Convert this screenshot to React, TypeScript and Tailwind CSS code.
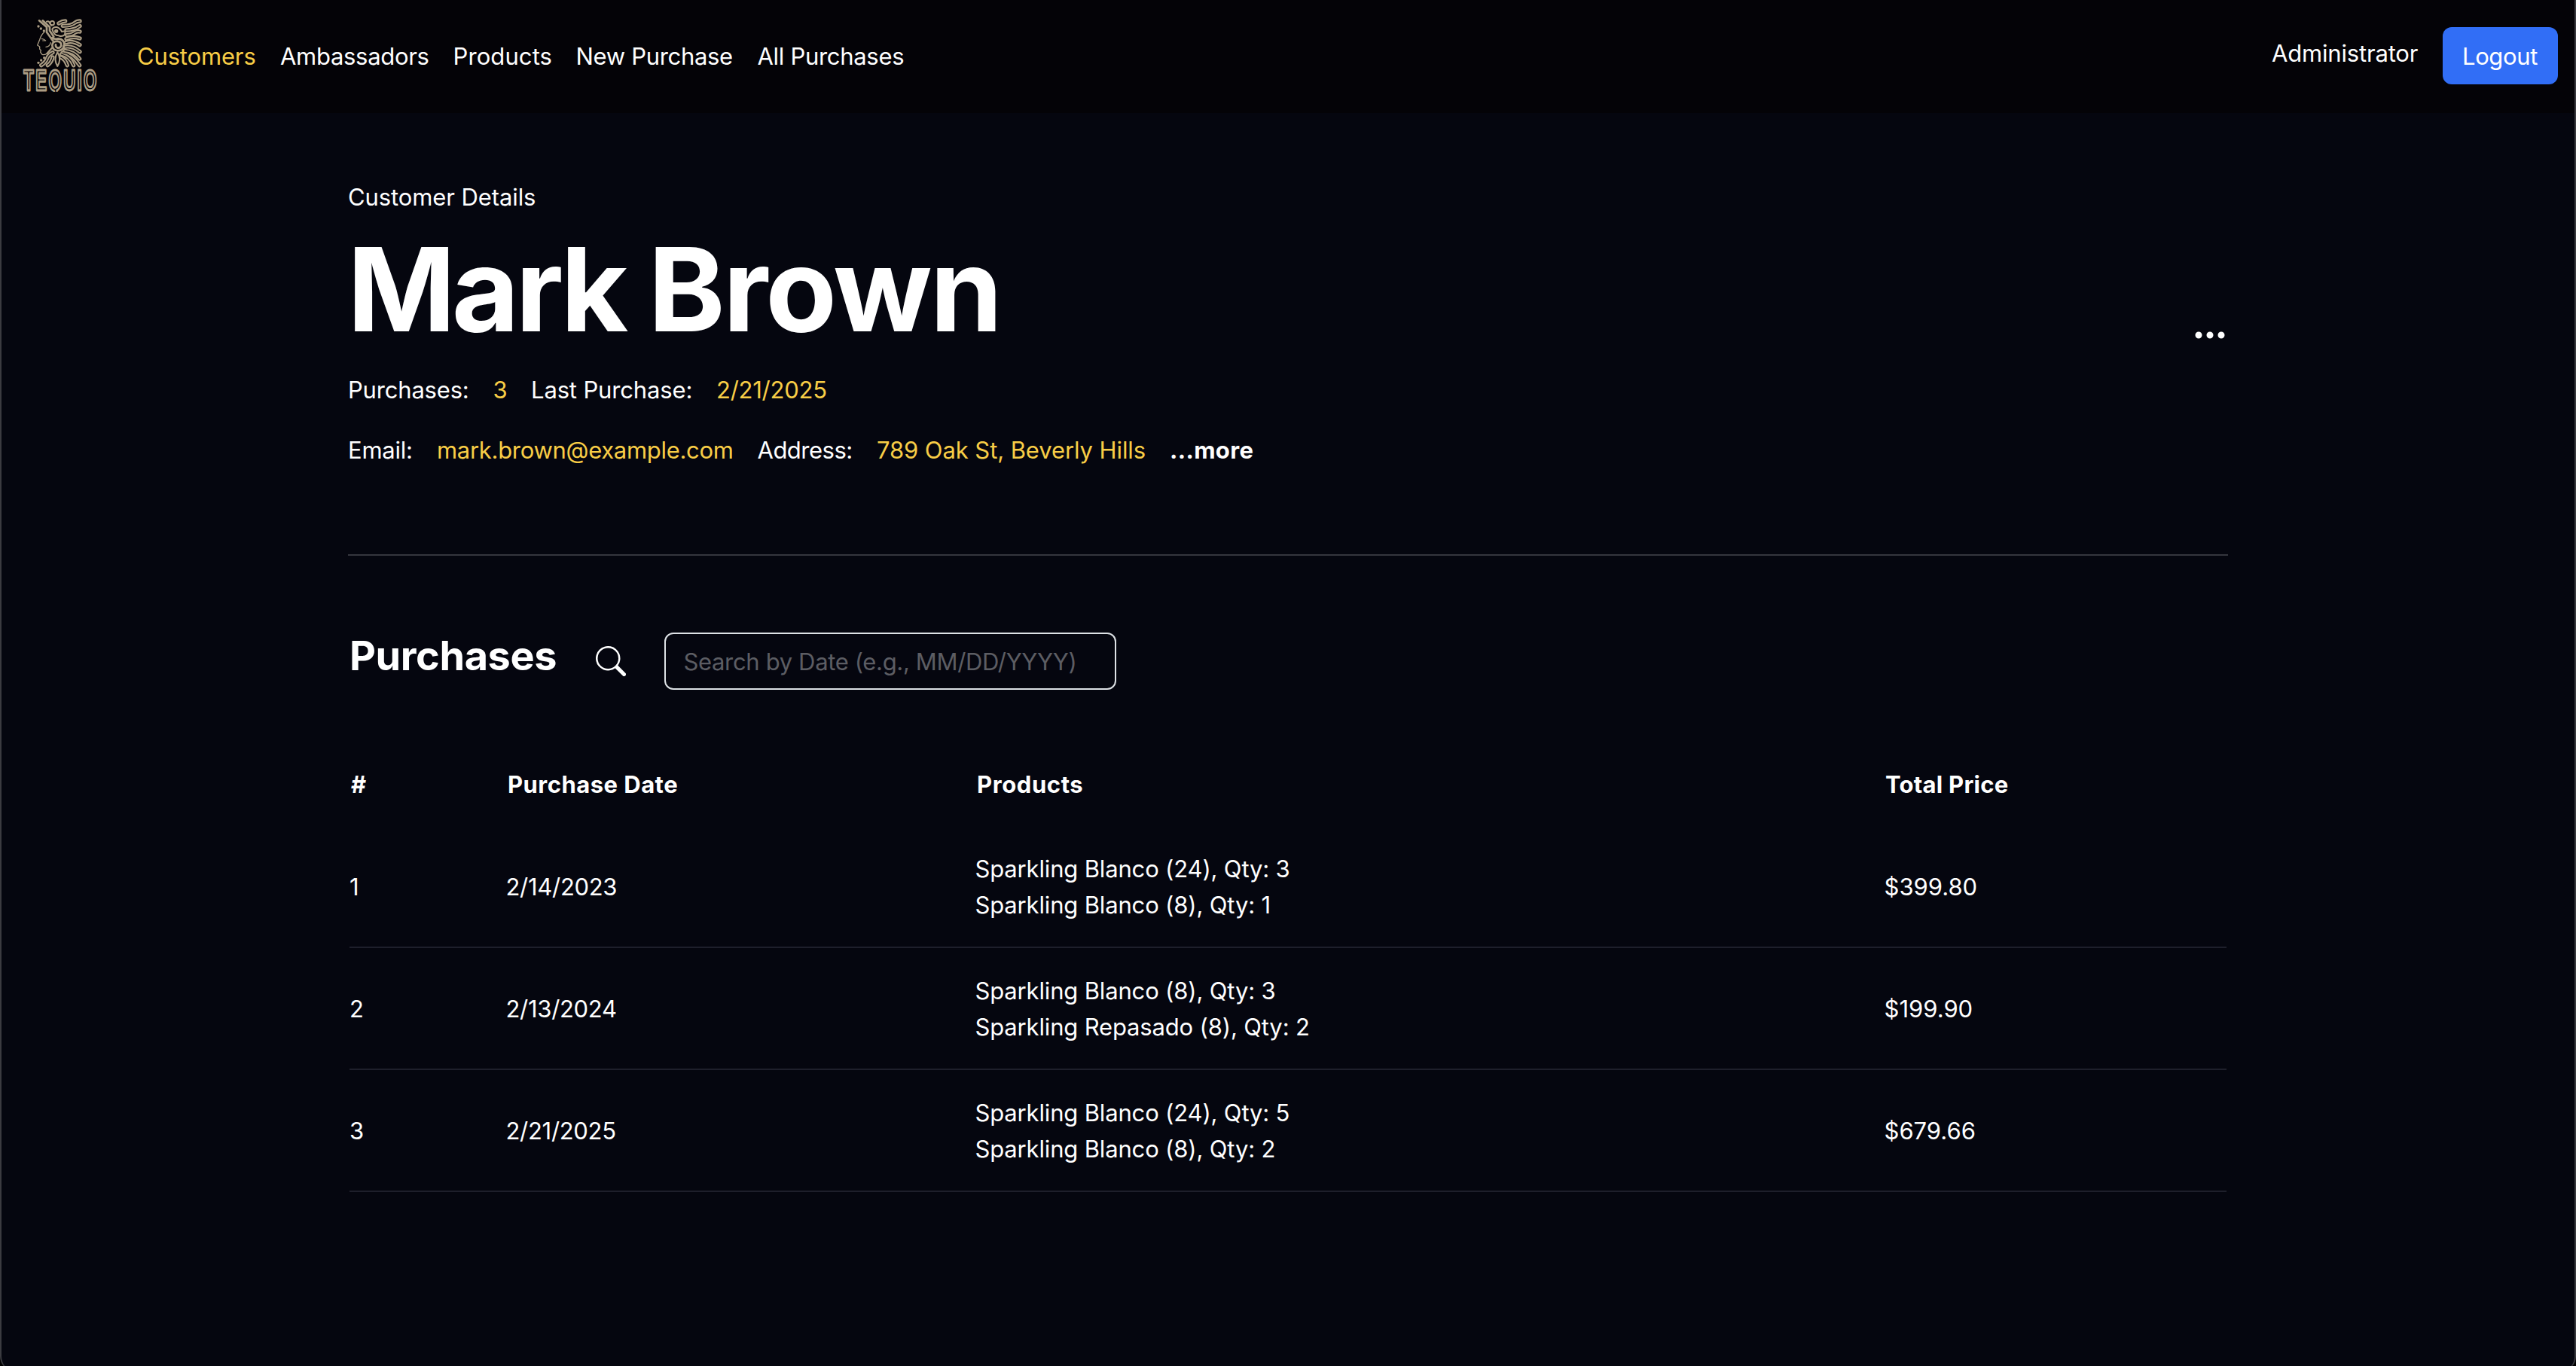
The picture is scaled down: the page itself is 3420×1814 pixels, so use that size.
import React from "react";
import { BsSearch, BsThreeDots } from "react-icons/bs";

const feathers = [
  "M234 93 Q248 84 260 84",
  "M250 103 Q284 103 298 91 Q306 84 318 84",
  "M264 120 Q296 120 318 104",
  "M266 140 Q286 139 298 130 Q308 123 318 126",
  "M264 155 Q292 143 318 153",
  "M262 170 Q288 160 318 179",
  "M257 187 Q288 180 318 206",
  "M258 202 Q294 204 317 234",
  "M250 210 Q288 216 317 260",
  "M244 216 Q278 224 293 260",
  "M242 228 Q260 236 268 260",
  "M210 209 Q192 218 186 236 Q180 250 164 260",
  "M210 228 Q206 248 190 260",
];

function Logo() {
  return (
    <svg className="h-[150px] w-[150px] shrink-0 overflow-visible" viewBox="6 0 450 450" fill="none" strokeLinecap="round" strokeLinejoin="round">
      <clipPath id="wordmark">
        <rect x="80" y="268" width="320" height="98" />
      </clipPath>
      <g stroke="#ab9d84" strokeWidth="16">
        {feathers.map((d) => (
          <path key={d} d={d} />
        ))}
      </g>
      <g stroke="#040307" strokeWidth="3.5">
        {feathers.map((d) => (
          <path key={d} d={d} />
        ))}
      </g>
      <g stroke="#ab9d84" strokeWidth="6">
        <path d="M156 82 L186 108 L186 128 L212 164" strokeWidth="8" />
        <path d="M170 82 L198 108 L198 122 L214 146" strokeWidth="8" />
        <circle cx="208" cy="92" r="8" />
        <path d="M186 86 Q192 82 196 88 Q198 96 206 102" />
        <path d="M208 116 Q214 106 226 108 Q240 112 246 126 L260 124 L258 138 Q248 148 234 142 Q214 142 208 116 Z" fill="#040307" />
        <circle cx="224" cy="124" r="5" fill="#ab9d84" />
        <path d="M208 150 Q216 158 232 154 Q256 156 256 178 Q254 202 230 202 Q208 200 208 180 Q210 164 228 164 Q244 166 244 180 Q242 192 230 191 Q220 188 222 178" strokeWidth="8" />
        <path d="M229 208 Q212 236 229 264 Q246 236 229 208 Z" />
        <path d="M176 128 Q164 138 158 158 L149 180 L158 186 L158 196 L163 200 L161 208 L168 217 Q180 220 188 212" strokeWidth="4" />
        <path d="M188 212 L206 192" strokeWidth="7" />
        <path d="M166 155 Q174 154 182 162 L170 162" strokeWidth="3.5" />
        <path d="M183 187 Q198 186 202 170" strokeWidth="4" />
      </g>
      <g fill="#ab9d84">
        <circle cx="153" cy="105" r="5" />
        <circle cx="163" cy="114" r="5" />
        <circle cx="175" cy="123" r="5" />
        <circle cx="153" cy="250" r="5" />
        <circle cx="164" cy="240" r="5" />
        <circle cx="176" cy="230" r="5" />
      </g>
      <g clipPath="url(#wordmark)">
        <text
          transform="translate(94 361) scale(0.57 1)"
          className="font-['Liberation_Sans'] font-bold tracking-[12.5px]"
          fontSize="117"
          fill="#040307"
          stroke="#ab9d84"
          strokeWidth="9"
        >
          TEQUIO
        </text>
      </g>
    </svg>
  );
}

const navLinks = [
  { label: "Customers", cls: "w-[190px] tracking-[-0.16px] text-[#f8cd46]" },
  { label: "Ambassadors", cls: "w-[229.5px] tracking-[-0.3px]" },
  { label: "Products", cls: "w-[163px] tracking-[0.1px]" },
  { label: "New Purchase", cls: "w-[241px] tracking-[-0.32px]" },
  { label: "All Purchases", cls: "tracking-[-0.3px]" },
];

const purchases = [
  { id: "1", date: "2/14/2023", items: ["Sparkling Blanco (24), Qty: 3", "Sparkling Blanco (8), Qty: 1"], total: "$399.80" },
  { id: "2", date: "2/13/2024", items: ["Sparkling Blanco (8), Qty: 3", "Sparkling Repasado (8), Qty: 2"], total: "$199.90" },
  { id: "3", date: "2/21/2025", items: ["Sparkling Blanco (24), Qty: 5", "Sparkling Blanco (8), Qty: 2"], total: "$679.66" },
];

export default function App() {
  return (
    <div className="h-[1814px] w-[3420px] overflow-hidden bg-black">
      <div className="h-[1821px] overflow-hidden whitespace-nowrap rounded-b-[20px] border-x-2 border-[#3b3b40] bg-[#05060f] font-['Inter',sans-serif] text-[31px] leading-[48px] text-white">
        <header className="flex h-[150px] items-center bg-[#040307] pr-[22px]">
          <Logo />
          <nav className="ml-[30px] flex">
            {navLinks.map((l) => (
              <a key={l.label} className={l.cls}>
                {l.label}
              </a>
            ))}
          </nav>
          <div className="ml-auto flex items-center">
            <span className="w-[227px] pb-2 tracking-[-0.18px]">Administrator</span>
            <button className="mb-[2px] flex h-[76px] w-[153px] items-center justify-center rounded-[12px] bg-[#316ef6] pr-px pt-[2px] tracking-[-0.35px]">
              Logout
            </button>
          </div>
        </header>

        <main className="ml-[460px] w-[2496px] pt-[88px]">
          <section className="flex justify-between">
            <div>
              <p className="tracking-[-0.1px]">Customer Details</p>
              <h1 className="-ml-px mt-[2px] text-[154.6px] font-bold leading-[192px]">
                <span className="tracking-[-5.2px]">Mark </span>
                <span className="tracking-[-2.8px]">Brown</span>
              </h1>
              <div className="mt-[14px] flex">
                <span className="w-[192.5px] tracking-[-0.19px]">Purchases:</span>
                <span className="w-[50.5px] text-[#f8cd46]">3</span>
                <span className="w-[246px] tracking-[-0.15px]">Last Purchase:</span>
                <span className="tracking-[-0.25px] text-[#f8cd46]">2/21/2025</span>
              </div>
              <div className="mt-8 flex">
                <span className="w-[118px] tracking-[-0.24px]">Email:</span>
                <span className="w-[425.5px] tracking-[-0.3px] text-[#f8cd46]">mark.brown@example.com</span>
                <span className="w-[158.5px] tracking-[-0.5px]">Address:</span>
                <span className="w-[389px] tracking-[-0.09px] text-[#f8cd46]">789 Oak St, Beverly Hills</span>
                <span className="font-bold tracking-[0.38px]">...more</span>
              </div>
            </div>
            <BsThreeDots className="mt-[183px] size-12" />
          </section>

          <hr className="mt-[114px] border-t-2 border-[#35363e]" />

          <section className="mt-[102px] flex h-[76px] items-start pl-[2px]">
            <h2 className="-mt-[3px] w-[326.5px] text-[54px] font-bold leading-[67px] tracking-[-0.4px]">Purchases</h2>
            <BsSearch className="mt-[18px] size-10" />
            <input
              className="ml-[51px] h-[76px] w-[600px] rounded-[12px] border-2 border-[#dee2e6] bg-transparent px-6 pt-px tracking-[-0.35px] placeholder:text-[#5c5d63]"
              placeholder="Search by Date (e.g., MM/DD/YYYY)"
            />
          </section>

          <section className="ml-[2px] mt-[102px] w-[2492px]">
            <div className="grid h-[79px] grid-cols-[208px_623px_1207px_452px] pl-[2px] font-bold">
              <span>#</span>
              <span className="tracking-[0.48px]">Purchase Date</span>
              <span className="tracking-[0.6px]">Products</span>
              <span className="-ml-px tracking-[0.26px]">Total Price</span>
            </div>
            {purchases.map((p) => (
              <div
                key={p.id}
                className="grid h-[162px] grid-cols-[207.5px_623px_1207px_454px] items-center border-b-2 border-[#1e1f2b] pt-[2px]"
              >
                <span>{p.id}</span>
                <span className="tracking-[-0.3px]">{p.date}</span>
                <div className="tracking-[-0.16px]">
                  {p.items.map((i) => (
                    <div key={i}>{i}</div>
                  ))}
                </div>
                <span>{p.total}</span>
              </div>
            ))}
          </section>
        </main>
      </div>
    </div>
  );
}
